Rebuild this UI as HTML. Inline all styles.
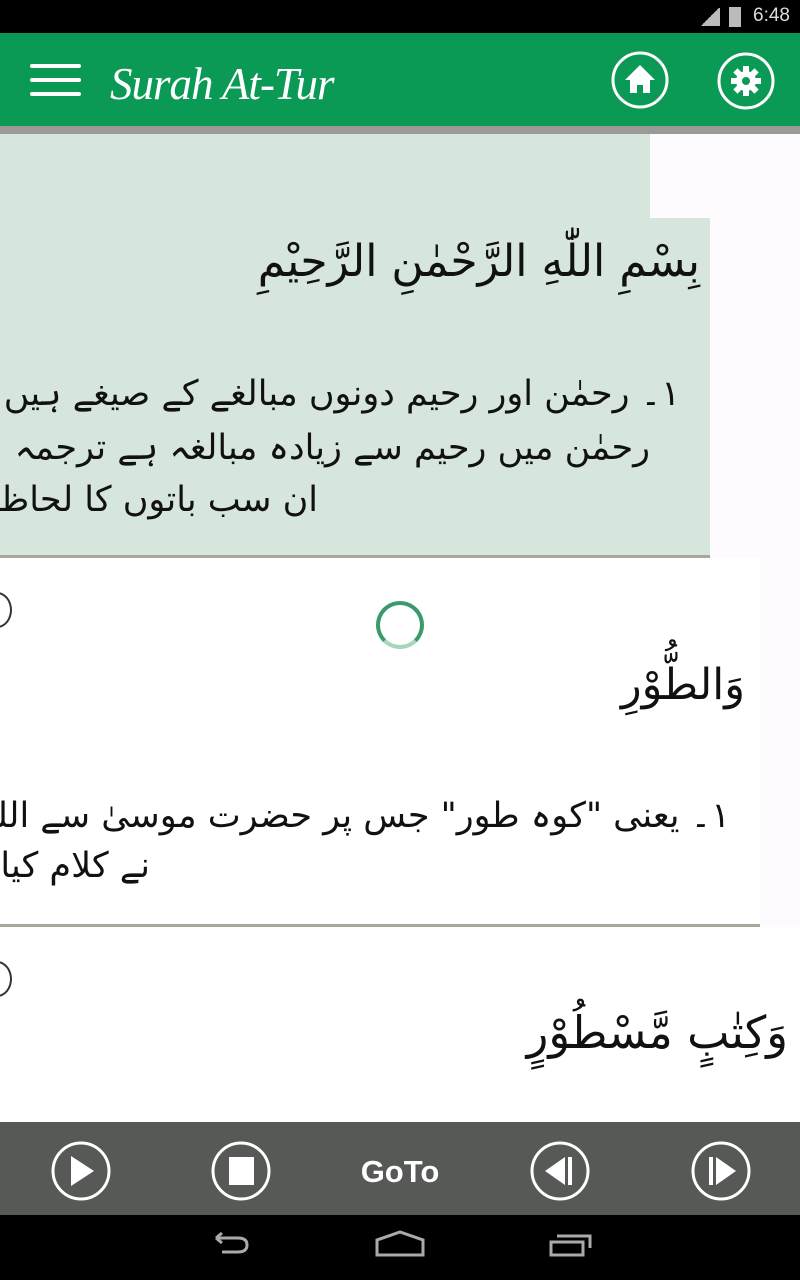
<!DOCTYPE html>
<html><head><meta charset="utf-8"><style>
*{margin:0;padding:0;box-sizing:border-box}
body{width:800px;height:1280px;overflow:hidden;background:#fdfbfd;position:relative;font-family:"Liberation Sans","DejaVu Sans",sans-serif}
.abs{position:absolute}
.ar{font-family:"DejaVu Sans","Liberation Serif",serif;direction:rtl;white-space:nowrap;color:#111}
</style></head><body>
<div class="abs" style="left:0;top:0;width:800px;height:33px;background:#000"></div>
<div class="abs" style="right:10px;top:5px;color:#ddd;font-size:19px">6:48</div>
<div class="abs" style="left:700px;top:8px;width:20px;height:18px;background:linear-gradient(135deg,transparent 50%,#bbb 50%)"></div>
<div class="abs" style="left:729px;top:7px;width:12px;height:20px;background:#bbb"></div>
<div class="abs" style="left:0;top:33px;width:800px;height:93px;background:#0b9a55"></div>
<div class="abs" style="left:0;top:126px;width:800px;height:8px;background:#9a9a96"></div>
<div class="abs" style="left:30px;top:64px;width:51px;height:4px;background:#fff;border-radius:2px"></div>
<div class="abs" style="left:30px;top:78px;width:51px;height:4px;background:#fff;border-radius:2px"></div>
<div class="abs" style="left:30px;top:92px;width:51px;height:4px;background:#fff;border-radius:2px"></div>
<div class="abs" style="left:110px;top:58px;color:#fff;font-family:'Liberation Serif',serif;font-style:italic;font-size:45px;letter-spacing:-1px">Surah At-Tur</div>
<svg class="abs" style="left:610px;top:50px" width="60" height="60" viewBox="0 0 60 60"><circle cx="30" cy="30" r="27" fill="none" stroke="#fff" stroke-width="3"/><path d="M30 15 L45 30 H40 V43 H33 V35 H27 V43 H20 V30 H15 Z" fill="#fff"/></svg>
<svg class="abs" style="left:716px;top:51px" width="60" height="60" viewBox="0 0 60 60"><circle cx="30" cy="30" r="27" fill="none" stroke="#fff" stroke-width="3"/><g fill="#fff"><circle cx="30" cy="30" r="10"/><rect x="27" y="15" width="6" height="30"/><rect x="15" y="27" width="30" height="6"/><rect x="27" y="15" width="6" height="30" transform="rotate(45 30 30)"/><rect x="27" y="15" width="6" height="30" transform="rotate(-45 30 30)"/></g><circle cx="30" cy="30" r="4" fill="#0b9a55"/></svg>

<div class="abs" style="left:0;top:134px;width:710px;height:423px;background:#d6e6dc"></div>
<div class="abs" style="left:650px;top:134px;width:150px;height:84px;background:#fdfbfd"></div>
<div class="abs" style="left:0;top:555px;width:710px;height:3px;background:#a8a89a"></div>
<div class="abs ar" style="right:100px;top:236px;font-size:44px">بِسْمِ اللّٰهِ الرَّحْمٰنِ الرَّحِيْمِ</div>
<div class="abs ar" style="right:120px;top:374px;font-size:35px">١۔ رحمٰن اور رحیم دونوں مبالغے کے صیغے ہیں</div>
<div class="abs ar" style="right:150px;top:428px;font-size:35px">رحمٰن میں رحیم سے زیادہ مبالغہ ہے ترجمہ</div>
<div class="abs ar" style="right:482px;top:480px;font-size:35px">ان سب باتوں کا لحاظ</div>

<div class="abs" style="left:0;top:558px;width:760px;height:368px;background:#fff"></div>
<div class="abs" style="left:0;top:924px;width:760px;height:3px;background:#a8a89a"></div>
<div class="abs" style="left:-18px;top:592px;width:30px;height:36px;border:2px solid #333;border-radius:50%"></div>
<div class="abs" style="left:376px;top:601px;width:48px;height:48px;border:4px solid #3a9a6a;border-radius:50%;border-bottom-color:#a6d6bc"></div>
<div class="abs ar" style="right:55px;top:660px;font-size:43px">وَالطُّوْرِ</div>
<div class="abs ar" style="right:70px;top:796px;font-size:35px">١۔ یعنی "کوہ طور" جس پر حضرت موسیٰ سے اللہ</div>
<div class="abs ar" style="right:650px;top:846px;font-size:35px">نے کلام کیا</div>

<div class="abs" style="left:0;top:927px;width:800px;height:195px;background:#fff"></div>
<div class="abs" style="left:-18px;top:961px;width:30px;height:36px;border:2px solid #333;border-radius:50%"></div>
<div class="abs ar" style="right:12px;top:1006px;font-size:45px">وَكِتٰبٍ مَّسْطُوْرٍ</div>

<div class="abs" style="left:0;top:1122px;width:800px;height:93px;background:#575957"></div>
<svg class="abs" style="left:0;top:1122px" width="800" height="93" viewBox="0 0 800 93">
<g fill="none" stroke="#fff" stroke-width="3">
<ellipse cx="81" cy="49" rx="28" ry="28"/><ellipse cx="241" cy="49" rx="28" ry="28"/><ellipse cx="560" cy="49" rx="28" ry="28"/><ellipse cx="721" cy="49" rx="28" ry="28"/></g>
<g fill="#fff"><path d="M71 34 L94 49 L71 64 Z"/><rect x="229" y="35" width="25" height="28"/>
<path d="M565 35 V63 L545 49 Z"/><rect x="568" y="35" width="4" height="28"/>
<path d="M716 35 V63 L736 49 Z"/><rect x="709" y="35" width="4" height="28"/></g>
<text x="400" y="60" fill="#fff" font-family="Liberation Sans" font-weight="bold" font-size="31" text-anchor="middle">GoTo</text>
</svg>
<div class="abs" style="left:0;top:1215px;width:800px;height:65px;background:#000"></div>
<svg class="abs" style="left:0;top:1215px" width="800" height="65" viewBox="0 0 800 65"><g fill="none" stroke="#aaa" stroke-width="3">
<path d="M218 23 H238 Q247 23 247 30 Q247 37 238 37 H222 M216 23 L222 18 M216 23 L222 28"/>
<path d="M377 40 V25 L400 17 L423 25 V40 Z"/>
<rect x="551" y="27" width="32" height="13"/><path d="M557 21 H590 V33"/></g></svg>
</body></html>
